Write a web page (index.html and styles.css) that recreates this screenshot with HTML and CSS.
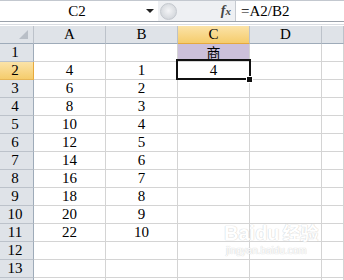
FILE: index.html
```html
<!DOCTYPE html>
<html lang="zh-CN">
<head>
    <meta charset="UTF-8">
    <meta name="viewport" content="width=device-width, initial-scale=1.0">
    <title>商 - Sheet1</title>
    <link rel="stylesheet" href="styles.css">
</head>
<body>
    <div class="formula-bar">
        <div class="name-box">
            <span class="name">C2</span>
            <span class="caret"></span>
        </div>
        <div class="tools">
            <span class="knob"></span>
            <span class="fx"><i>f</i><i class="x">x</i></span>
        </div>
        <div class="formula">=A2/B2</div>
    </div>
    <div class="bar-gap"></div>

    <div class="sheet">
        <div class="row head">
            <div class="corner"><span class="tri"></span></div>
            <div class="col">A</div>
            <div class="col">B</div>
            <div class="col active">C</div>
            <div class="col">D</div>
            <div class="col"></div>
        </div>
        <div class="row">
            <div class="num">1</div>
            <div class="cell"></div>
            <div class="cell"></div>
            <div class="cell title">商</div>
            <div class="cell"></div>
            <div class="cell"></div>
        </div>
        <div class="row">
            <div class="num active">2</div>
            <div class="cell">4</div>
            <div class="cell">1</div>
            <div class="cell selected">4<span class="handle"></span></div>
            <div class="cell"></div>
            <div class="cell"></div>
        </div>
        <div class="row"><div class="num">3</div><div class="cell">6</div><div class="cell">2</div><div class="cell"></div><div class="cell"></div><div class="cell"></div></div>
        <div class="row"><div class="num">4</div><div class="cell">8</div><div class="cell">3</div><div class="cell"></div><div class="cell"></div><div class="cell"></div></div>
        <div class="row"><div class="num">5</div><div class="cell">10</div><div class="cell">4</div><div class="cell"></div><div class="cell"></div><div class="cell"></div></div>
        <div class="row"><div class="num">6</div><div class="cell">12</div><div class="cell">5</div><div class="cell"></div><div class="cell"></div><div class="cell"></div></div>
        <div class="row"><div class="num">7</div><div class="cell">14</div><div class="cell">6</div><div class="cell"></div><div class="cell"></div><div class="cell"></div></div>
        <div class="row"><div class="num">8</div><div class="cell">16</div><div class="cell">7</div><div class="cell"></div><div class="cell"></div><div class="cell"></div></div>
        <div class="row"><div class="num">9</div><div class="cell">18</div><div class="cell">8</div><div class="cell"></div><div class="cell"></div><div class="cell"></div></div>
        <div class="row"><div class="num">10</div><div class="cell">20</div><div class="cell">9</div><div class="cell"></div><div class="cell"></div><div class="cell"></div></div>
        <div class="row"><div class="num">11</div><div class="cell">22</div><div class="cell">10</div><div class="cell"></div><div class="cell"></div><div class="cell"></div></div>
        <div class="row"><div class="num">12</div><div class="cell"></div><div class="cell"></div><div class="cell"></div><div class="cell"></div><div class="cell"></div></div>
        <div class="row"><div class="num">13</div><div class="cell"></div><div class="cell"></div><div class="cell"></div><div class="cell"></div><div class="cell"></div></div>
        <div class="row"><div class="num"></div><div class="cell"></div><div class="cell"></div><div class="cell"></div><div class="cell"></div><div class="cell"></div></div>

        <div class="watermark">
            <div class="brand">Bai<span class="du">du</span><span class="jy">经验</span></div>
            <div class="site">jingyan.baidu.com</div>
        </div>
    </div>
</body>
</html>
```

FILE: styles.css
```css
body {
    margin: 0;
    background-color: #fff;
    font-family: "Liberation Serif", "Noto Sans CJK SC", serif;
    font-size: 15px;
    color: #000;
    width: 344px;
    height: 280px;
    overflow: hidden;
}

/* formula bar */
.formula-bar {
    display: flex;
    height: 20px;
    border-top: 1px solid #c3c8cf;
    border-bottom: 1px solid #9ba2ab;
}

.name-box {
    width: 158px;
    display: flex;
    align-items: center;
    background-color: #fff;
}

.name {
    flex: 1;
    text-align: center;
    line-height: 20px;
    padding-left: 8px;
}

.caret {
    width: 0;
    height: 0;
    border-left: 4px solid transparent;
    border-right: 4px solid transparent;
    border-top: 4px solid #222;
    margin-right: 4px;
}

.tools {
    width: 77px;
    display: flex;
    align-items: center;
    background-color: #eef0f3;
    border-right: 1px solid #c6cad0;
}

.knob {
    width: 15px;
    height: 15px;
    border-radius: 50%;
    margin-left: 2px;
    border: 1px solid #c4c8ce;
    background: radial-gradient(circle at 50% 45%, #f4f5f7 0, #dcdfe3 55%, #c9cdd3 100%);
}

.fx {
    margin-left: auto;
    margin-right: 4px;
    font-family: "Liberation Serif", serif;
    font-size: 14px;
    font-weight: bold;
    color: #444;
}

.fx .x {
    font-size: 11px;
}

.formula {
    flex: 1;
    padding-left: 5px;
    line-height: 20px;
    background-color: #fff;
}

.bar-gap {
    height: 2px;
    border-bottom: 1px solid #dadde2;
    margin-bottom: 1px;
}

/* grid */
.sheet {
    position: relative;
}

.row {
    display: grid;
    grid-template-columns: 34px 72px 72px 72px 72px 1fr;
    height: 18px;
}

.row > div {
    box-sizing: border-box;
    height: 18px;
    line-height: 17px;
    text-align: center;
    border-right: 1px solid #d4d4d4;
    border-bottom: 1px solid #d4d4d4;
}

.head > div {
    background-color: #dfe3e8;
    border-right-color: #bcc2ca;
    border-bottom-color: #9eabb9;
}

.corner {
    position: relative;
}

.tri {
    position: absolute;
    right: 5px;
    bottom: 4px;
    width: 0;
    height: 0;
    border-left: 9px solid transparent;
    border-bottom: 9px solid #b9bfc7;
}

.row > .num {
    background-color: #dfe3e8;
    border-right-color: #9eabb9;
    border-bottom-color: #bcc2ca;
    padding-right: 3px;
}

.row > .active {
    background: linear-gradient(#fbe3a8, #f5cc6c);
    border-bottom-color: #e6a93d;
}

.row > .num.active {
    border-right-color: #e6a93d;
    border-bottom-color: #e6b657;
}

.row > .title {
    background-color: #ccc0da;
    font-family: "Noto Sans CJK SC", sans-serif;
    font-size: 14px;
    line-height: 16px;
}

.selected {
    position: relative;
}

.selected::after {
    content: "";
    position: absolute;
    left: -2px;
    top: -3px;
    width: 75px;
    height: 21px;
    box-sizing: border-box;
    border: 2px solid #111;
}

.handle {
    position: absolute;
    right: -4px;
    bottom: -4px;
    width: 5px;
    height: 5px;
    background-color: #111;
    border: 1px solid #fff;
    z-index: 1;
}

/* faint site watermark over the grid */
.watermark {
    position: absolute;
    left: 224px;
    top: 196px;
    color: #fff;
    text-shadow: 0 0 1px #d2d2d2, 0 0 1px #d2d2d2;
    font-family: "Liberation Sans", "Noto Sans CJK SC", sans-serif;
}

.brand {
    font-size: 20px;
    font-weight: bold;
    line-height: 22px;
}

.jy {
    margin-left: 3px;
    font-size: 18px;
}

.site {
    font-size: 10px;
    line-height: 12px;
    padding-left: 2px;
}
```
